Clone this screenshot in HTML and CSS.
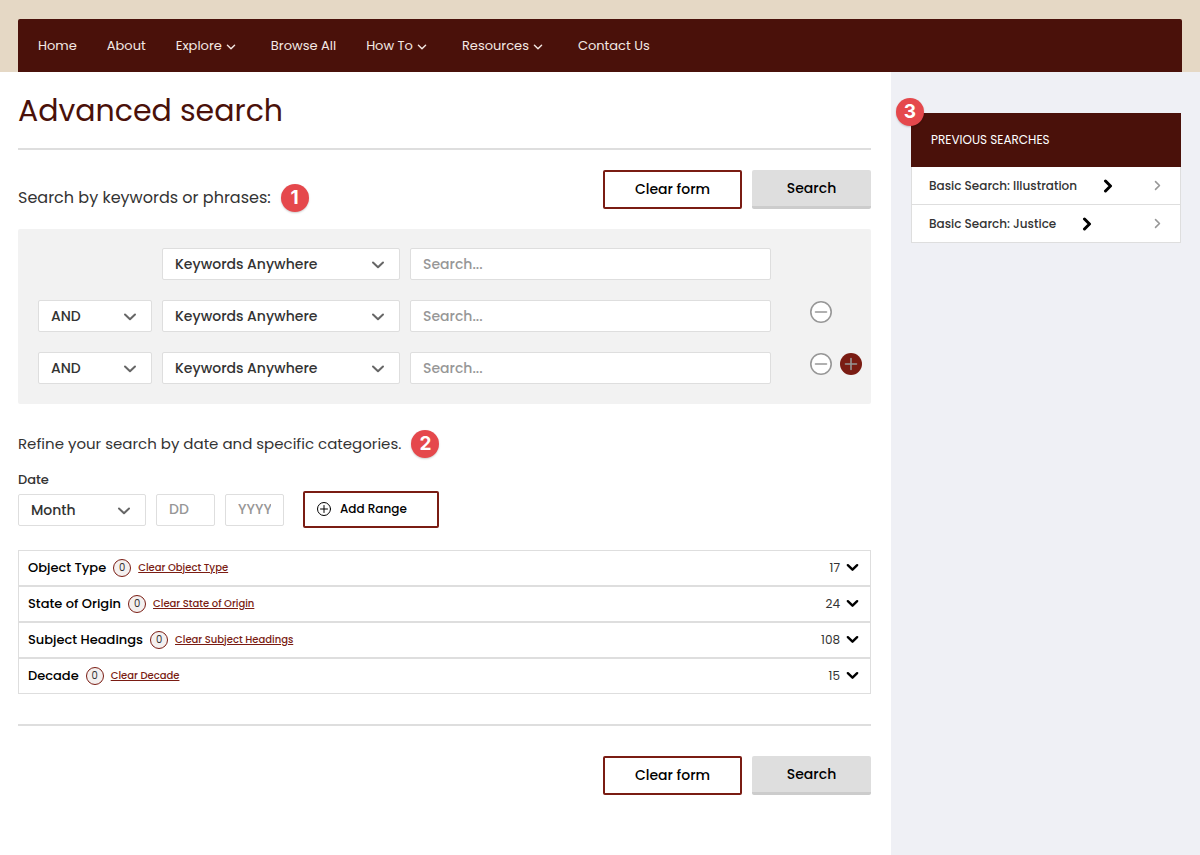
FILE: index.html
```html
<!DOCTYPE html>
<html lang="en">
<head>
    <meta charset="UTF-8">
    <meta name="viewport" content="width=device-width, initial-scale=1.0">
    <title>Advanced search</title>
    <link rel="stylesheet" href="styles.css">
</head>
<body>
    <svg class="sprite" aria-hidden="true">
        <symbol id="chevron" viewBox="0 0 14 14">
            <path d="M2 4.500l5 4.800 5-4.800"/>
        </symbol>
        <symbol id="chevron-right" viewBox="0 0 14 14">
            <path d="M4.500 2l5 5-5 5"/>
        </symbol>
    </svg>

    <header>
        <nav class="navbar">
            <a href="#">Home</a>
            <a href="#">About</a>
            <a href="#" class="has-menu">Explore <svg><use href="#chevron"/></svg></a>
            <a href="#">Browse All</a>
            <a href="#" class="has-menu">How To <svg><use href="#chevron"/></svg></a>
            <a href="#" class="has-menu">Resources <svg><use href="#chevron"/></svg></a>
            <a href="#">Contact Us</a>
        </nav>
    </header>

    <div class="page">
        <main>
            <h1>Advanced search</h1>
            <hr>
            <form id="searchForm">
                <div class="toolbar">
                    <h2>Search by keywords or phrases: <span class="step">1</span></h2>
                    <div class="buttons">
                        <button type="reset" class="btn-outline">Clear form</button>
                        <button type="submit" class="btn-search">Search</button>
                    </div>
                </div>

                <div class="keywords">
                    <div class="row">
                        <div class="select field">
                            <select aria-label="Field 1"><option>Keywords Anywhere</option></select>
                            <svg><use href="#chevron"/></svg>
                        </div>
                        <input type="text" aria-label="Search term 1" placeholder="Search...">
                    </div>
                    <div class="row">
                        <div class="select">
                            <select aria-label="Operator 2"><option>AND</option><option>OR</option><option>NOT</option></select>
                            <svg><use href="#chevron"/></svg>
                        </div>
                        <div class="select field">
                            <select aria-label="Field 2"><option>Keywords Anywhere</option></select>
                            <svg><use href="#chevron"/></svg>
                        </div>
                        <input type="text" aria-label="Search term 2" placeholder="Search...">
                        <div class="row-actions">
                            <button type="button" class="remove" aria-label="Remove row"><svg viewBox="0 0 22 22"><circle cx="11" cy="11" r="10.200"/><path d="M5.500 11h11"/></svg></button>
                        </div>
                    </div>
                    <div class="row">
                        <div class="select">
                            <select aria-label="Operator 3"><option>AND</option><option>OR</option><option>NOT</option></select>
                            <svg><use href="#chevron"/></svg>
                        </div>
                        <div class="select field">
                            <select aria-label="Field 3"><option>Keywords Anywhere</option></select>
                            <svg><use href="#chevron"/></svg>
                        </div>
                        <input type="text" aria-label="Search term 3" placeholder="Search...">
                        <div class="row-actions">
                            <button type="button" class="remove" aria-label="Remove row"><svg viewBox="0 0 22 22"><circle cx="11" cy="11" r="10.200"/><path d="M5.500 11h11"/></svg></button>
                            <button type="button" class="add" aria-label="Add row"><svg viewBox="0 0 22 22"><path d="M5.500 11h11M11 5.500v11"/></svg></button>
                        </div>
                    </div>
                </div>

                <h2 class="refine">Refine your search by date and specific categories. <span class="step">2</span></h2>

                <label class="date-label" for="month">Date</label>
                <div class="date">
                    <div class="select month">
                        <select id="month"><option>Month</option></select>
                        <svg><use href="#chevron"/></svg>
                    </div>
                    <input type="text" class="short" aria-label="Day" placeholder="DD">
                    <input type="text" class="short" aria-label="Year" placeholder="YYYY">
                    <button type="button" class="btn-outline add-range">
                        <svg viewBox="0 0 16 16"><circle cx="8" cy="8" r="6.500"/><path d="M4.500 8h7M8 4.500v7"/></svg>
                        Add Range
                    </button>
                </div>

                <div class="facets">
                    <div class="facet">
                        <h3>Object Type</h3>
                        <span class="selected">0</span>
                        <a href="#">Clear Object Type</a>
                        <span class="total">17</span>
                        <button type="button" aria-label="Show Object Type"><svg><use href="#chevron"/></svg></button>
                    </div>
                    <div class="facet">
                        <h3>State of Origin</h3>
                        <span class="selected">0</span>
                        <a href="#">Clear State of Origin</a>
                        <span class="total">24</span>
                        <button type="button" aria-label="Show State of Origin"><svg><use href="#chevron"/></svg></button>
                    </div>
                    <div class="facet">
                        <h3>Subject Headings</h3>
                        <span class="selected">0</span>
                        <a href="#">Clear Subject Headings</a>
                        <span class="total">108</span>
                        <button type="button" aria-label="Show Subject Headings"><svg><use href="#chevron"/></svg></button>
                    </div>
                    <div class="facet">
                        <h3>Decade</h3>
                        <span class="selected">0</span>
                        <a href="#">Clear Decade</a>
                        <span class="total">15</span>
                        <button type="button" aria-label="Show Decade"><svg><use href="#chevron"/></svg></button>
                    </div>
                </div>

                <hr>
                <div class="buttons bottom">
                    <button type="reset" class="btn-outline">Clear form</button>
                    <button type="submit" class="btn-search">Search</button>
                </div>
            </form>
        </main>

        <aside>
            <section class="previous">
                <span class="step">3</span>
                <h2>PREVIOUS SEARCHES</h2>
                <a href="#">Basic Search: Illustration <svg class="go"><use href="#chevron-right"/></svg><svg class="more"><use href="#chevron-right"/></svg></a>
                <a href="#">Basic Search: Justice <svg class="go"><use href="#chevron-right"/></svg><svg class="more"><use href="#chevron-right"/></svg></a>
            </section>
        </aside>
    </div>
</body>
</html>
```

FILE: styles.css
```css
* {
    box-sizing: border-box;
}
body {
    margin: 0;
    min-height: 100vh;
    display: flex;
    flex-direction: column;
    font-family: Poppins, Inter, sans-serif;
    color: #333;
    background-color: #fff;
}
h1, h2, h3 {
    margin: 0;
}
svg {
    width: 14px;
    height: 14px;
    flex-shrink: 0;
    fill: none;
    stroke: currentColor;
    stroke-width: 2;
    stroke-linecap: round;
    stroke-linejoin: round;
}
.sprite {
    display: none;
}
button, input, select {
    font-family: inherit;
}
button {
    cursor: pointer;
}

/* header */
header {
    padding: 19px 18px 0;
    background-color: #e5d8c5;
}
.navbar {
    display: flex;
    align-items: center;
    gap: 30px;
    min-height: 53px;
    padding: 0 20px;
    background-color: #4a110a;
    border-radius: 2px 2px 0 0;
}
.navbar a {
    display: flex;
    align-items: center;
    gap: 4px;
    color: #f4e9e4;
    font-size: 13px;
    line-height: 20px;
    text-decoration: none;
}
.navbar .has-menu {
    padding-right: 5px;
}
.navbar svg {
    width: 10px;
    height: 10px;
    margin-top: 2px;
}

/* layout */
.page {
    flex: 1;
    display: flex;
}
main {
    flex: 1;
    padding: 0 20px 40px 18px;
}
aside {
    width: 309px;
    padding: 41px 19px 40px 20px;
    background-color: #eff0f5;
}
h1 {
    padding: 17px 0 15px;
    color: #4a110a;
    font-size: 30px;
    font-weight: 400;
    line-height: 44px;
}
hr {
    height: 2px;
    margin: 0;
    border: 0;
    background-color: #dedede;
}
h2 {
    display: flex;
    align-items: center;
    gap: 10px;
    font-size: 16px;
    font-weight: 400;
    line-height: 28px;
}
.step {
    width: 28px;
    height: 28px;
    border-radius: 50%;
    background-color: #e5484c;
    box-shadow: 0 1px 2px rgba(0, 0, 0, 0.2);
    color: #fff;
    font-family: Inter, sans-serif;
    font-size: 19px;
    font-weight: 700;
    line-height: 28px;
    text-align: center;
}

/* buttons */
.toolbar {
    display: flex;
    justify-content: space-between;
    align-items: flex-start;
    margin: 20px 0 17px;
}
.toolbar h2 {
    padding-top: 14px;
}
.buttons {
    display: flex;
    justify-content: flex-end;
    gap: 10px;
}
.buttons button {
    height: 39px;
    padding-bottom: 2px;
    font-size: 14px;
    font-weight: 500;
}
.btn-outline {
    width: 139px;
    border: 2px solid #7a1c13;
    border-radius: 2px;
    background-color: #fff;
    color: #000;
}
.btn-search {
    width: 119px;
    border: 0;
    border-bottom: 3px solid #ccc;
    border-radius: 2px;
    background-color: #dedede;
    color: #000;
}
.buttons .btn-search {
    padding-bottom: 0;
}
.bottom {
    margin-top: 30px;
}

/* keyword rows */
.keywords {
    display: flex;
    flex-direction: column;
    gap: 20px;
    padding: 19px 9px 20px 20px;
    background-color: #f2f2f2;
    border-radius: 2px;
}
.row {
    display: grid;
    grid-template-columns: 114px 238px 1fr 81px;
    gap: 10px;
}
.row .field {
    grid-column: 2;
}
.row-actions {
    display: flex;
    gap: 8px;
    padding-top: 1px;
    padding-left: 29px;
}
.row-actions button {
    width: 22px;
    height: 22px;
    padding: 0;
    border: 0;
    border-radius: 50%;
    background-color: #fff;
    color: #979797;
}
.row-actions .add {
    background-color: #7a1c13;
}
.row-actions svg {
    display: block;
    width: 22px;
    height: 22px;
    stroke-width: 1.6;
}
input, select {
    width: 100%;
    height: 32px;
    padding: 0 12px;
    border: 1px solid #dedede;
    border-radius: 2px;
    background-color: #fff;
    color: #333;
    font-size: 14px;
    font-weight: 500;
}
select {
    appearance: none;
}
input::placeholder {
    color: #979797;
}
.select {
    position: relative;
}
.select svg {
    position: absolute;
    top: 10px;
    right: 15px;
    color: #666;
    pointer-events: none;
}

/* date */
.refine {
    margin-top: 26px;
    font-size: 15px;
}
.date-label {
    display: block;
    margin-top: 12px;
    font-size: 13px;
    font-weight: 500;
    line-height: 20px;
}
.date {
    display: flex;
    align-items: center;
    gap: 10px;
    margin: 1px 0 22px;
}
.month {
    width: 128px;
}
.date .short {
    width: 59px;
}
.add-range {
    display: flex;
    align-items: center;
    gap: 8px;
    width: 136px;
    height: 37px;
    margin-left: 9px;
    padding: 0 11px 2px;
    font-size: 12px;
    font-weight: 500;
}
.add-range svg {
    width: 16px;
    height: 16px;
    stroke-width: 1;
}

/* facets */
.facets {
    margin-bottom: 30px;
}
.facet {
    display: flex;
    align-items: center;
    height: 36px;
    padding: 0 11px 0 9px;
    border: 1px solid #dedede;
}
.facet h3 {
    color: #000;
    font-size: 13px;
    font-weight: 500;
}
.selected {
    width: 18px;
    height: 18px;
    margin: 0 7px;
    border: 1px solid #7a1c13;
    border-radius: 50%;
    background-color: #f4f0ef;
    font-size: 10px;
    line-height: 16px;
    text-align: center;
}
.facet a {
    color: #7a1c13;
    font-size: 10px;
    font-weight: 500;
}
.total {
    margin-left: auto;
    font-size: 12px;
}
.facet button {
    display: flex;
    margin-left: 6px;
    padding: 0 0 2px;
    border: 0;
    background: none;
    color: #000;
}
.facet svg {
    width: 13px;
    height: 13px;
    stroke-width: 2.6;
}

/* previous searches */
.previous {
    position: relative;
}
.previous .step {
    position: absolute;
    top: -15px;
    left: -15px;
}
.previous h2 {
    padding: 13px 20px;
    background-color: #4a110a;
    color: #fff;
    font-size: 12px;
}
.previous a {
    display: flex;
    align-items: center;
    height: 38px;
    padding: 0 17px;
    border: 1px solid #dedede;
    border-top: 0;
    background-color: #fff;
    color: #333;
    font-size: 12px;
    font-weight: 500;
    text-decoration: none;
}
.go {
    margin-left: 24px;
    color: #000;
    stroke-width: 3;
}
.more {
    width: 11px;
    height: 11px;
    margin-left: auto;
    color: #979797;
}
```
